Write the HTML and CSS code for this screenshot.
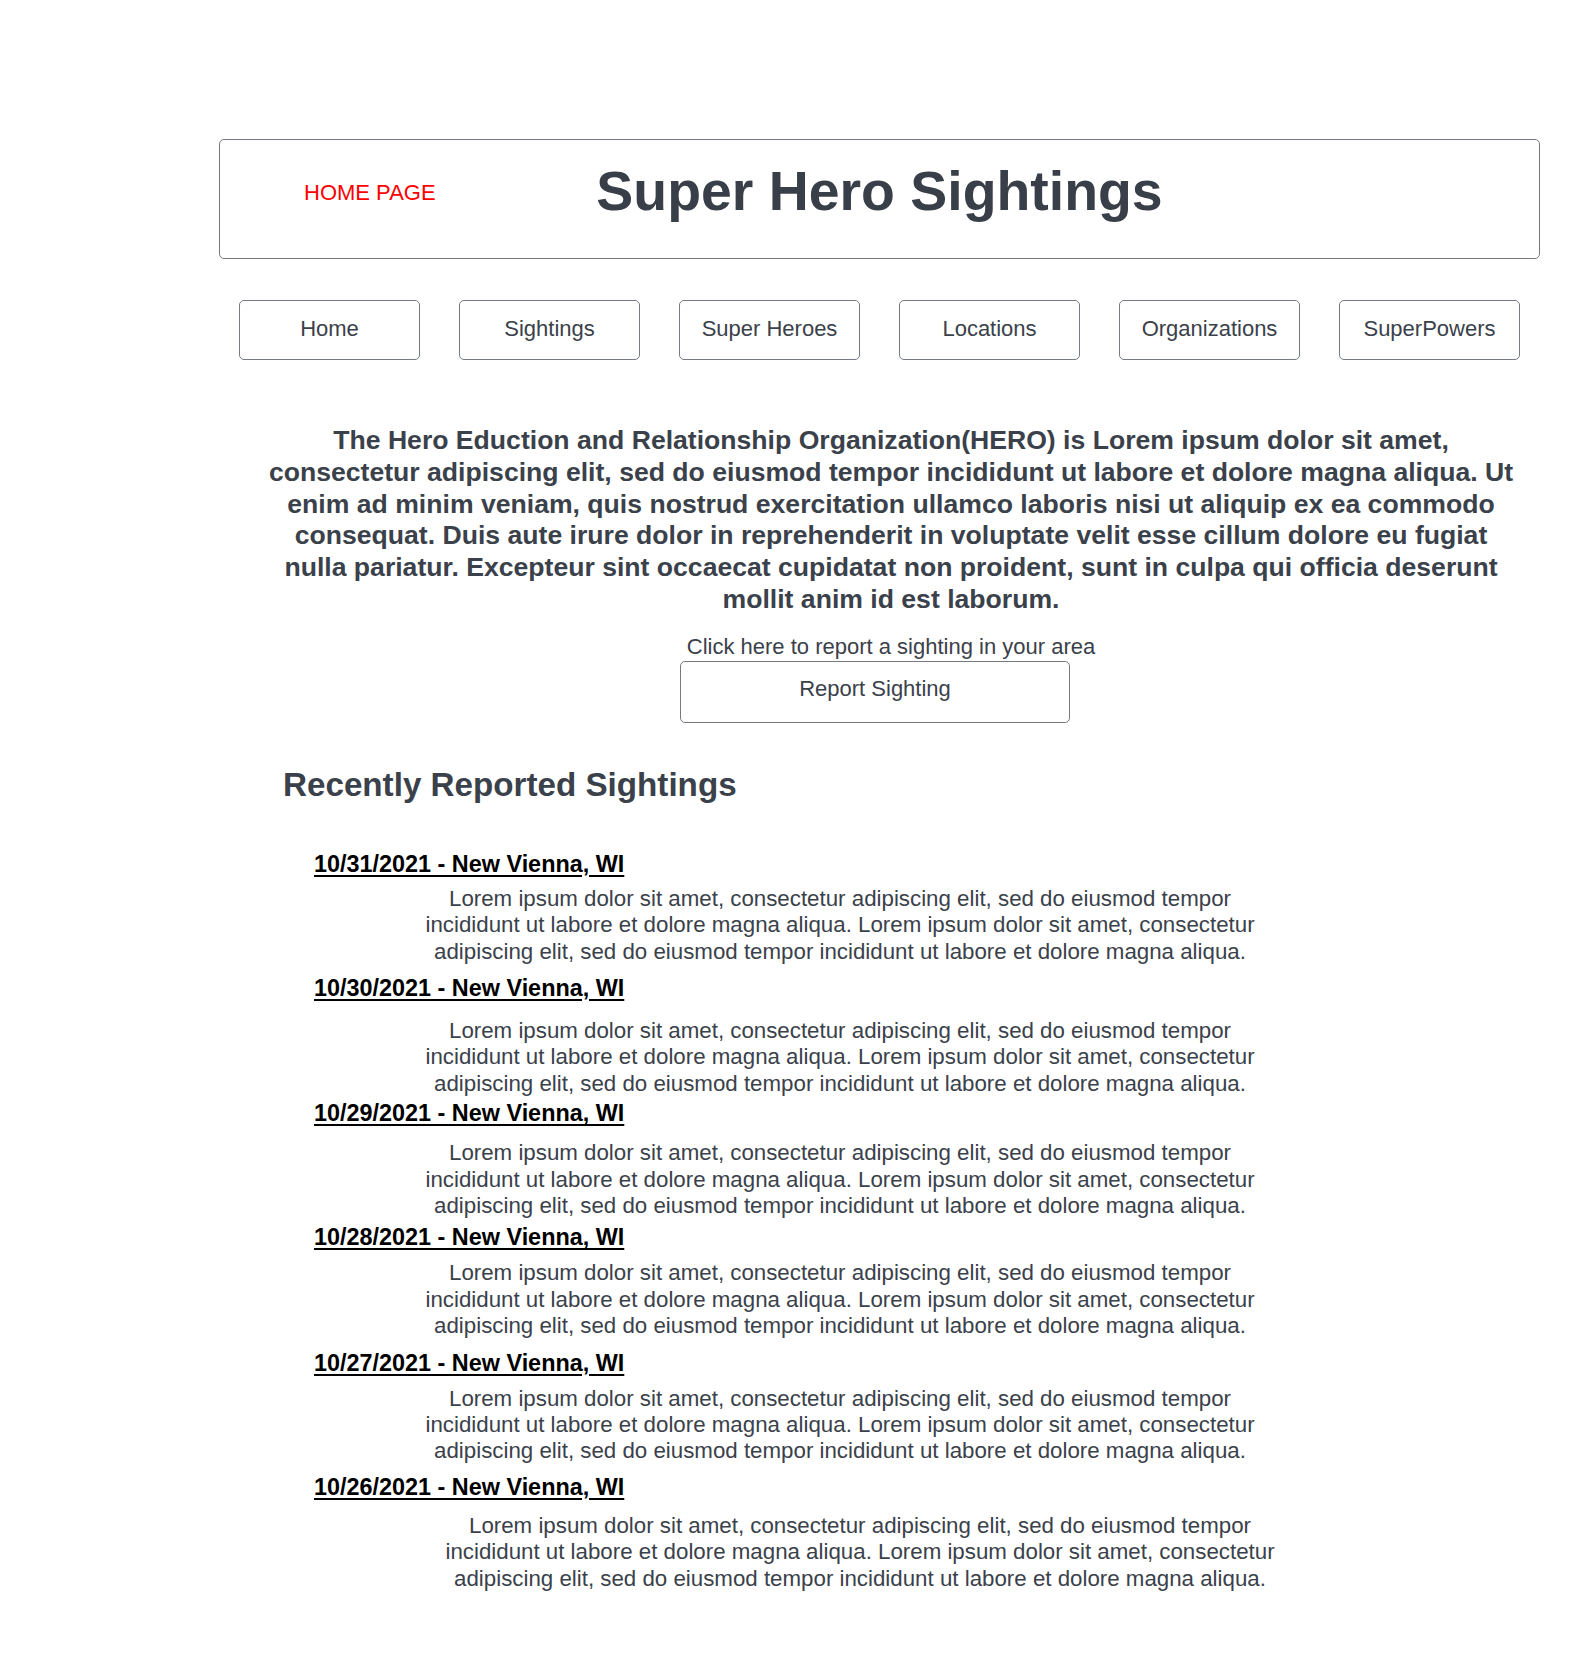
FILE: index.html
```html
<!DOCTYPE html>
<html lang="en">
<head>
<meta charset="utf-8">
<title>Super Hero Sightings</title>
<link rel="stylesheet" href="styles.css">
</head>
<body>
<div class="page">
  <header class="masthead">
    <div class="masthead__label">HOME PAGE</div>
    <h1 class="masthead__title">Super Hero Sightings</h1>
    <div></div>
  </header>

  <nav class="nav">
    <a class="nav__btn" href="#">Home</a>
    <a class="nav__btn" href="#">Sightings</a>
    <a class="nav__btn" href="#">Super Heroes</a>
    <a class="nav__btn" href="#">Locations</a>
    <a class="nav__btn" href="#">Organizations</a>
    <a class="nav__btn" href="#">SuperPowers</a>
  </nav>

  <p class="intro">The Hero Eduction and Relationship Organization(HERO) is Lorem ipsum dolor sit amet,<br>consectetur adipiscing elit, sed do eiusmod tempor incididunt ut labore et dolore magna aliqua. Ut enim ad minim veniam, quis nostrud exercitation ullamco laboris nisi ut aliquip ex ea commodo consequat. Duis aute irure dolor in reprehenderit in voluptate velit esse cillum dolore eu fugiat nulla pariatur. Excepteur sint occaecat cupidatat non proident, sunt in culpa qui officia deserunt mollit anim id est laborum.</p>

  <section class="report">
    <p class="report__hint">Click here to report a sighting in your area</p>
    <a class="report__btn" href="#">Report Sighting</a>
  </section>

  <h2 class="recent__title">Recently Reported Sightings</h2>

  <section class="sightings">
    <article class="sighting">
      <h3 class="sighting__date">10/31/2021 - New Vienna, WI</h3>
      <p class="sighting__text">Lorem ipsum dolor sit amet, consectetur adipiscing elit, sed do eiusmod tempor incididunt ut labore et dolore magna aliqua. Lorem ipsum dolor sit amet, consectetur adipiscing elit, sed do eiusmod tempor incididunt ut labore et dolore magna aliqua.</p>
    </article>
    <article class="sighting">
      <h3 class="sighting__date">10/30/2021 - New Vienna, WI</h3>
      <p class="sighting__text">Lorem ipsum dolor sit amet, consectetur adipiscing elit, sed do eiusmod tempor incididunt ut labore et dolore magna aliqua. Lorem ipsum dolor sit amet, consectetur adipiscing elit, sed do eiusmod tempor incididunt ut labore et dolore magna aliqua.</p>
    </article>
    <article class="sighting">
      <h3 class="sighting__date">10/29/2021 - New Vienna, WI</h3>
      <p class="sighting__text">Lorem ipsum dolor sit amet, consectetur adipiscing elit, sed do eiusmod tempor incididunt ut labore et dolore magna aliqua. Lorem ipsum dolor sit amet, consectetur adipiscing elit, sed do eiusmod tempor incididunt ut labore et dolore magna aliqua.</p>
    </article>
    <article class="sighting">
      <h3 class="sighting__date">10/28/2021 - New Vienna, WI</h3>
      <p class="sighting__text">Lorem ipsum dolor sit amet, consectetur adipiscing elit, sed do eiusmod tempor incididunt ut labore et dolore magna aliqua. Lorem ipsum dolor sit amet, consectetur adipiscing elit, sed do eiusmod tempor incididunt ut labore et dolore magna aliqua.</p>
    </article>
    <article class="sighting">
      <h3 class="sighting__date">10/27/2021 - New Vienna, WI</h3>
      <p class="sighting__text">Lorem ipsum dolor sit amet, consectetur adipiscing elit, sed do eiusmod tempor incididunt ut labore et dolore magna aliqua. Lorem ipsum dolor sit amet, consectetur adipiscing elit, sed do eiusmod tempor incididunt ut labore et dolore magna aliqua.</p>
    </article>
    <article class="sighting">
      <h3 class="sighting__date">10/26/2021 - New Vienna, WI</h3>
      <p class="sighting__text">Lorem ipsum dolor sit amet, consectetur adipiscing elit, sed do eiusmod tempor incididunt ut labore et dolore magna aliqua. Lorem ipsum dolor sit amet, consectetur adipiscing elit, sed do eiusmod tempor incididunt ut labore et dolore magna aliqua.</p>
    </article>
  </section>
</div>
</body>
</html>
```

FILE: styles.css
```css
* {
  box-sizing: border-box;
}

html, body {
  margin: 0;
  padding: 0;
  background: #ffffff;
}

body {
  font-family: "Liberation Sans", Arial, sans-serif;
  color: #3a414a;
}

.page {
  width: 1321px;
  margin-left: 219px;
  padding-top: 139px;
  padding-bottom: 60px;
}

/* Header box */
.masthead {
  height: 120px;
  border: 1px solid #767b83;
  border-radius: 5px;
  display: grid;
  grid-template-columns: 1fr auto 1fr;
  align-items: center;
  padding-bottom: 12px;
}

.masthead__label {
  padding-left: 84px;
  color: #ff0000;
  font-size: 22px;
  line-height: 26px;
}

.masthead__title {
  margin: 0 0 4px 0;
  font-size: 55.4px;
  line-height: 64px;
  font-weight: 700;
  color: #393f48;
}

/* Navigation */
.nav {
  margin-top: 41px;
  padding: 0 20px;
  display: flex;
  gap: 39px;
}

.nav__btn {
  width: 181px;
  height: 60px;
  border: 1px solid #767b83;
  border-radius: 5px;
  display: flex;
  align-items: center;
  justify-content: center;
  padding-bottom: 3px;
  font-size: 22px;
  color: #3a414a;
  text-decoration: none;
}

/* Intro paragraph */
.intro {
  margin: 65px 0 0 46px;
  width: 1252px;
  text-align: center;
  font-size: 26.6px;
  line-height: 31.8px;
  font-weight: 700;
  color: #3a414a;
}

/* Report */
.report {
  margin-left: 46px;
  width: 1252px;
}

.report__hint {
  margin: 18px 0 0 0;
  text-align: center;
  font-size: 22px;
  line-height: 26px;
}

.report__btn {
  display: flex;
  align-items: center;
  justify-content: center;
  margin: 1px 0 0 415px;
  width: 390px;
  height: 62px;
  padding-bottom: 5px;
  border: 1px solid #767b83;
  border-radius: 5px;
  font-size: 22px;
  color: #3a414a;
  text-decoration: none;
}

/* Recent sightings */
.recent__title {
  margin: 42px 0 0 64px;
  font-size: 33.2px;
  line-height: 40px;
  font-weight: 700;
  color: #3a414a;
}

.sightings {
  margin-top: 44px;
}

.sighting {
  margin-bottom: 7px;
}

.sighting__date {
  margin: 0 0 0 95px;
  font-size: 23.4px;
  line-height: 30px;
  font-weight: 700;
  color: #000000;
  text-decoration: underline;
  text-decoration-thickness: 2px;
  text-underline-offset: 3px;
}

.sighting__text {
  margin: 7px 0 0 196px;
  width: 850px;
  text-align: center;
  font-size: 22.3px;
  line-height: 26.4px;
  color: #3a414a;
}

/* The mockup spaces its entries slightly unevenly */
.sighting:nth-child(1) { margin-bottom: 8px; }
.sighting:nth-child(2) { margin-bottom: 1px; }
.sighting:nth-child(2) .sighting__text { margin-top: 15px; }
.sighting:nth-child(3) { margin-bottom: 3px; }
.sighting:nth-child(3) .sighting__text { margin-top: 12px; }
.sighting:nth-child(4) { margin-bottom: 8px; }
.sighting:nth-child(4) .sighting__text { margin-top: 8px; }
.sighting:nth-child(5) .sighting__text { margin-top: 8px; }

.sighting:nth-child(6) .sighting__text {
  margin-top: 11px;
  margin-left: 216px;
}
```
